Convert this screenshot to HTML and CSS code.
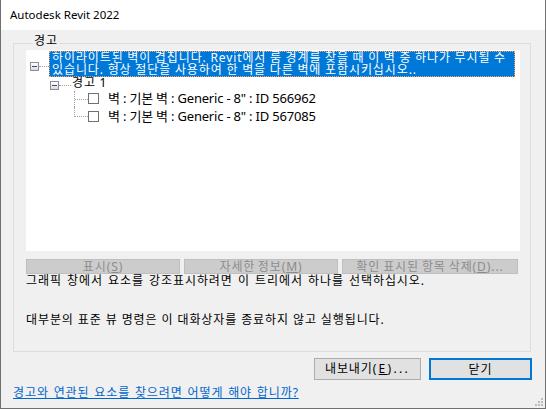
FILE: index.html
```html
<!DOCTYPE html>
<html lang="ko">
<head>
<meta charset="utf-8">
<title>Autodesk Revit 2022</title>
<link rel="stylesheet" href="styles.css">
</head>
<body>
<div class="win">
  <div class="titlebar">Autodesk Revit 2022</div>
  <div class="client">
    <div class="group">
      <div class="group-title">경고</div>
      <div class="tree">
        <div class="row row-msg">
          <span class="exp"></span><span class="hline hl-msg"></span>
          <div class="sel"><span class="sel-l1">하이라이트된 벽이 겹칩니다. Revit에서 룸 경계를 찾을 때 이 벽 중 하나가 무시될 수</span><br><span class="sel-l2">있습니다. 형상 절단을 사용하여 한 벽을 다른 벽에 포함시키십시오..</span></div>
        </div>
        <div class="row row-warn">
          <span class="exp exp-warn"></span><span class="hline hl-warn"></span><span class="label warn-label">경고 1</span>
        </div>
        <div class="row row-item">
          <span class="conn conn-mid"></span><span class="chk"></span><span class="label item-label">벽 : 기본 벽 : Generic - 8" : ID 566962</span>
        </div>
        <div class="row row-item">
          <span class="conn conn-last"></span><span class="chk"></span><span class="label item-label">벽 : 기본 벽 : Generic - 8" : ID 567085</span>
        </div>
      </div>
      <div class="btnrow">
        <button class="btn-dis btn-show" disabled>표시(<u>S</u>)</button>
        <button class="btn-dis btn-more" disabled>자세한 정보(<u>M</u>)</button>
        <button class="btn-dis btn-del" disabled>확인 표시된 항목 삭제(<u>D</u>)...</button>
      </div>
      <p class="info info1">그래픽 창에서 요소를 강조표시하려면 이 트리에서 하나를 선택하십시오.</p>
      <p class="info info2">대부분의 표준 뷰 명령은 이 대화상자를 종료하지 않고 실행됩니다.</p>
    </div>
    <div class="footer">
      <button class="btn btn-export">내보내기<span class="wide">(<u>E</u>)...</span></button>
      <button class="btn btn-close">닫기</button>
    </div>
    <a class="help" href="#">경고와 연관된 요소를 찾으려면 어떻게 해야 합니까?</a>
    <svg class="grip" width="9" height="9" viewBox="0 0 9 9">
      <g fill="#bcbcbc">
        <rect x="6" y="0" width="2" height="2"/>
        <rect x="3" y="3" width="2" height="2"/><rect x="6" y="3" width="2" height="2"/>
        <rect x="0" y="6" width="2" height="2"/><rect x="3" y="6" width="2" height="2"/><rect x="6" y="6" width="2" height="2"/>
      </g>
    </svg>
  </div>
</div>
</body>
</html>
```
FILE: styles.css
```css
* { box-sizing: border-box; }
html, body { margin: 0; padding: 0; background: #ffffff; }
body {
  font-family: "Noto Sans", "Noto Sans CJK KR", sans-serif;
  font-size: 12px;
  letter-spacing: 0.9px;
  color: #000;
}
.win {
  width: 546px;
  height: 409px;
  border-left: 1px solid #707070;
  border-right: 1px solid #707070;
  border-bottom: 1px solid #707070;
  display: flex;
  flex-direction: column;
}
.titlebar {
  height: 30px;
  background: #ffffff;
  font-family: "Noto Sans", sans-serif;
  font-size: 11.5px;
  letter-spacing: 0;
  line-height: 30px;
  padding-left: 9px;
}
.client {
  position: relative;
  flex: 1;
  background: #f0f0f0;
  display: flex;
  flex-direction: column;
}
.group {
  margin: 13px 14px 0 12px;
  height: 309px;
  border: 1px solid #dcdcdc;
  padding-left: 12px;
}
.group-title {
  margin: -9px 0 0 7px;
  width: fit-content;
  padding: 0 1px 0 1px;
  background: #f0f0f0;
  line-height: 12px;
}
.tree {
  margin-top: 3px;
  width: 494px;
  height: 201px;
  background: #ffffff;
  padding-top: 1px;
}
.row { display: flex; align-items: flex-start; }
.row-msg { height: 26px; padding-left: 4px; }
.row-warn { height: 12px; padding-left: 24px; }
.row-item { height: 18px; padding-left: 48px; }
.exp {
  flex: none;
  width: 9px;
  height: 9px;
  margin-top: 11px;
  border: 1px solid #8f8f8f;
  background: linear-gradient(#ffffff, #dcdcdc);
  display: flex;
  align-items: center;
  justify-content: center;
}
.exp::after {
  content: "";
  width: 5px;
  height: 1px;
  background: #2d4f9a;
}
.exp-warn { margin-top: 4px; }
.hline { flex: none; border-top: 1px dotted #a0a0a0; }
.hl-msg { width: 10px; margin-top: 15px; }
.hl-warn { width: 12px; margin-top: 8px; margin-right: 1px; }
.sel {
  width: 466px;
  height: 26px;
  background: #0078d7;
  border: 1px dotted #f7a35c;
  color: #ffffff;
  padding-left: 2px;
  line-height: 12px;
  white-space: nowrap;
}
.sel-l1 { word-spacing: -0.35px; }
.sel-l2 { word-spacing: -0.25px; }
.label { line-height: 12px; white-space: nowrap; }
.warn-label { word-spacing: -0.5px; }
.conn { flex: none; width: 14px; border-left: 1px dotted #a0a0a0; }
.conn-mid { height: 16px; margin-top: 2px; }
.conn-mid::after {
  content: "";
  display: block;
  width: 13px;
  height: 8px;
  border-bottom: 1px dotted #a0a0a0;
}
.conn-last { height: 10px; border-bottom: 1px dotted #a0a0a0; }
.chk {
  flex: none;
  width: 11px;
  height: 11px;
  margin-top: 4px;
  border: 1px solid #707070;
  background: #ffffff;
}
.item-label {
  margin: 3px 0 0 9px;
  font-size: 13px;
  letter-spacing: -0.2px;
}
.btnrow { display: flex; gap: 4px; margin-top: 8px; }
button {
  font-family: "Noto Sans", "Noto Sans CJK KR", sans-serif;
  font-size: 12px;
  letter-spacing: 0.9px;
  margin: 0;
  padding: 0;
}
.btn-dis {
  height: 15px;
  background: #cccccc;
  border: 1px solid #bfbfbf;
  color: #8c8c8c;
  line-height: 13px;
}
.btn-show { width: 154px; }
.btn-more { width: 154px; word-spacing: -1.5px; }
.btn-del { width: 176px; word-spacing: -1.1px; }
.info { margin: 1px 0 0; line-height: 12px; }
.info1 { word-spacing: 1.2px; }
.info2 { margin-top: 27px; word-spacing: 0; }
.footer {
  display: flex;
  justify-content: flex-end;
  gap: 8px;
  margin: 6px 13px 0 0;
}
.btn {
  height: 22px;
  background: #e1e1e1;
  border: 1px solid #adadad;
  color: #000;
  line-height: 20px;
}
.wide { letter-spacing: 2.3px; }
.btn-export { width: 107px; }
.btn-close { width: 103px; border: 2px solid #0078d7; }
.help {
  margin: 7px 0 0 12px;
  width: fit-content;
  color: #0066cc;
  line-height: 12px;
  word-spacing: 0.8px;
}
.grip { position: absolute; right: 1px; bottom: 1px; }
```
